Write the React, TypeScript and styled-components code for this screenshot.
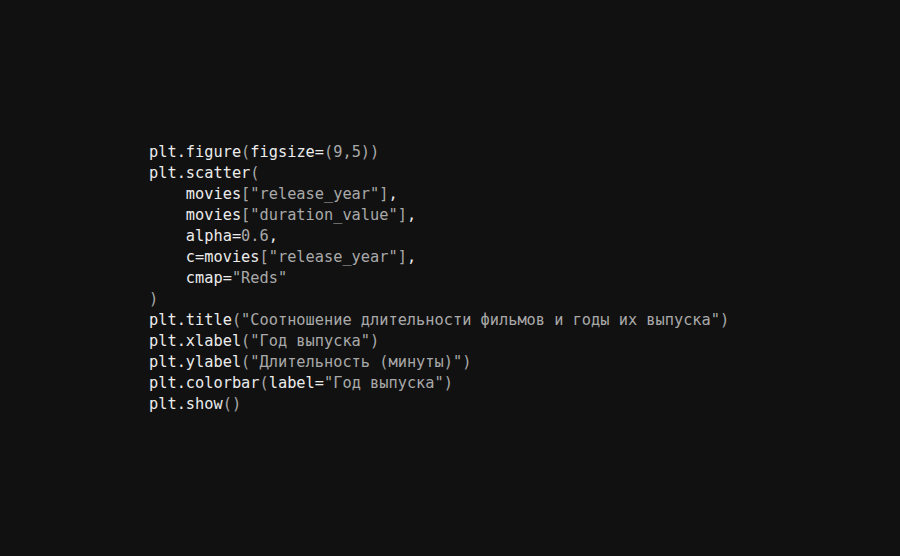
import React from "react";
import styled, { createGlobalStyle } from "styled-components";

const Global = createGlobalStyle`
  html, body { margin: 0; padding: 0; background: #111111; }
  #root { min-height: 100vh; }
`;

const Page = styled.div`
  height: 556px;
  display: flex;
  align-items: center;
  justify-content: center;
  background: #111111;
`;

const Code = styled.pre`
  margin: 0;
  width: 602px;
  font-family: "DejaVu Sans Mono", "Liberation Mono", monospace;
  font-size: 15.3px;
  line-height: 21px;
  color: #ececec;
  white-space: pre;
`;

const Dim = styled.span`
  color: #a9a9a9;
`;

type Seg = [string, boolean?];

const lines: Seg[][] = [
  [["plt.figure"], ["(", true], ["figsize="], ["(9,5))", true]],
  [["plt.scatter"], ["(", true]],
  [["    movies"], ['["release_year"]', true], [","]],
  [["    movies"], ['["duration_value"]', true], [","]],
  [["    alpha="], ["0.6", true], [","]],
  [["    c=movies"], ['["release_year"]', true], [","]],
  [["    cmap="], ['"Reds"', true]],
  [[")", true]],
  [["plt.title"], ['("Соотношение длительности фильмов и годы их выпуска")', true]],
  [["plt.xlabel"], ['("Год выпуска")', true]],
  [["plt.ylabel"], ['("Длительность (минуты)")', true]],
  [["plt.colorbar"], ["(", true], ["label="], ['"Год выпуска")', true]],
  [["plt.show"], ["()", true]],
];

export default function App() {
  return (
    <>
      <Global />
      <Page>
        <Code>
          {lines.map((segs, i) => (
            <React.Fragment key={i}>
              {segs.map(([t, dim], j) =>
                dim ? <Dim key={j}>{t}</Dim> : <React.Fragment key={j}>{t}</React.Fragment>
              )}
              {i < lines.length - 1 ? "\n" : null}
            </React.Fragment>
          ))}
        </Code>
      </Page>
    </>
  );
}
